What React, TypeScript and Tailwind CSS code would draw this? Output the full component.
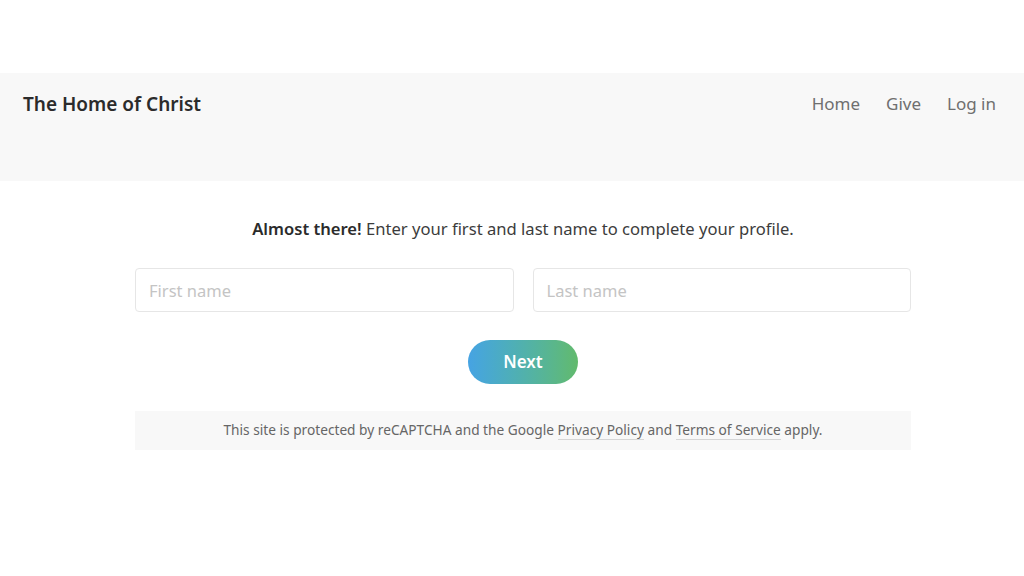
import React, { useState } from 'react';

const font = { fontFamily: '"Noto Sans", "Open Sans", Arial, sans-serif' };

const App: React.FC = () => {
  const [first, setFirst] = useState('');
  const [last, setLast] = useState('');

  return (
    <div className="w-[1024px] h-[576px] bg-white overflow-hidden" style={font}>
      <div className="h-[73px]" />
      <header className="h-[108px] bg-[#f8f8f8] flex items-start justify-between pl-[23px] pr-[28px] pt-[18px]">
        <div className="text-[19px] leading-[26px] font-semibold text-[#2b2b2b]">The Home of Christ</div>
        <nav className="flex gap-[26px] text-[17px] leading-[26px] text-[#6f6f6f]">
          <a href="#">Home</a>
          <a href="#">Give</a>
          <a href="#">Log in</a>
        </nav>
      </header>

      <main className="ml-[135px] w-[776px] flex flex-col items-center">
        <p className="mt-[36px] text-[16.6px] leading-[24px] text-[#3c3c3c]">
          <span className="font-semibold text-[#2b2b2b]">Almost there!</span> Enter your first and last name to complete your profile.
        </p>

        <div className="mt-[27px] w-full flex gap-[19px]">
          <input
            value={first}
            onChange={(e) => setFirst(e.target.value)}
            placeholder="First name"
            className="flex-1 h-[44px] rounded-[4px] border border-[#e6e6e6] px-[13px] text-[16.5px] text-[#333] placeholder:text-[#c4c4c4] outline-none"
          />
          <input
            value={last}
            onChange={(e) => setLast(e.target.value)}
            placeholder="Last name"
            className="flex-1 h-[44px] rounded-[4px] border border-[#e6e6e6] px-[13px] text-[16.5px] text-[#333] placeholder:text-[#c4c4c4] outline-none"
          />
        </div>

        <button className="mt-[28px] w-[110px] h-[44px] rounded-full bg-gradient-to-r from-[#46a3e3] to-[#62ba6c] text-white text-[17px] font-semibold">
          Next
        </button>

        <div className="mt-[27px] w-full h-[39px] bg-[#f8f8f8] flex items-center justify-center text-[13.7px] text-[#666]">
          <span>
            This site is protected by reCAPTCHA and the Google{' '}
            <a href="#" className="border-b border-[#d6d6d6]">Privacy Policy</a> and{' '}
            <a href="#" className="border-b border-[#d6d6d6]">Terms of Service</a> apply.
          </span>
        </div>
      </main>
    </div>
  );
};

export default App;
